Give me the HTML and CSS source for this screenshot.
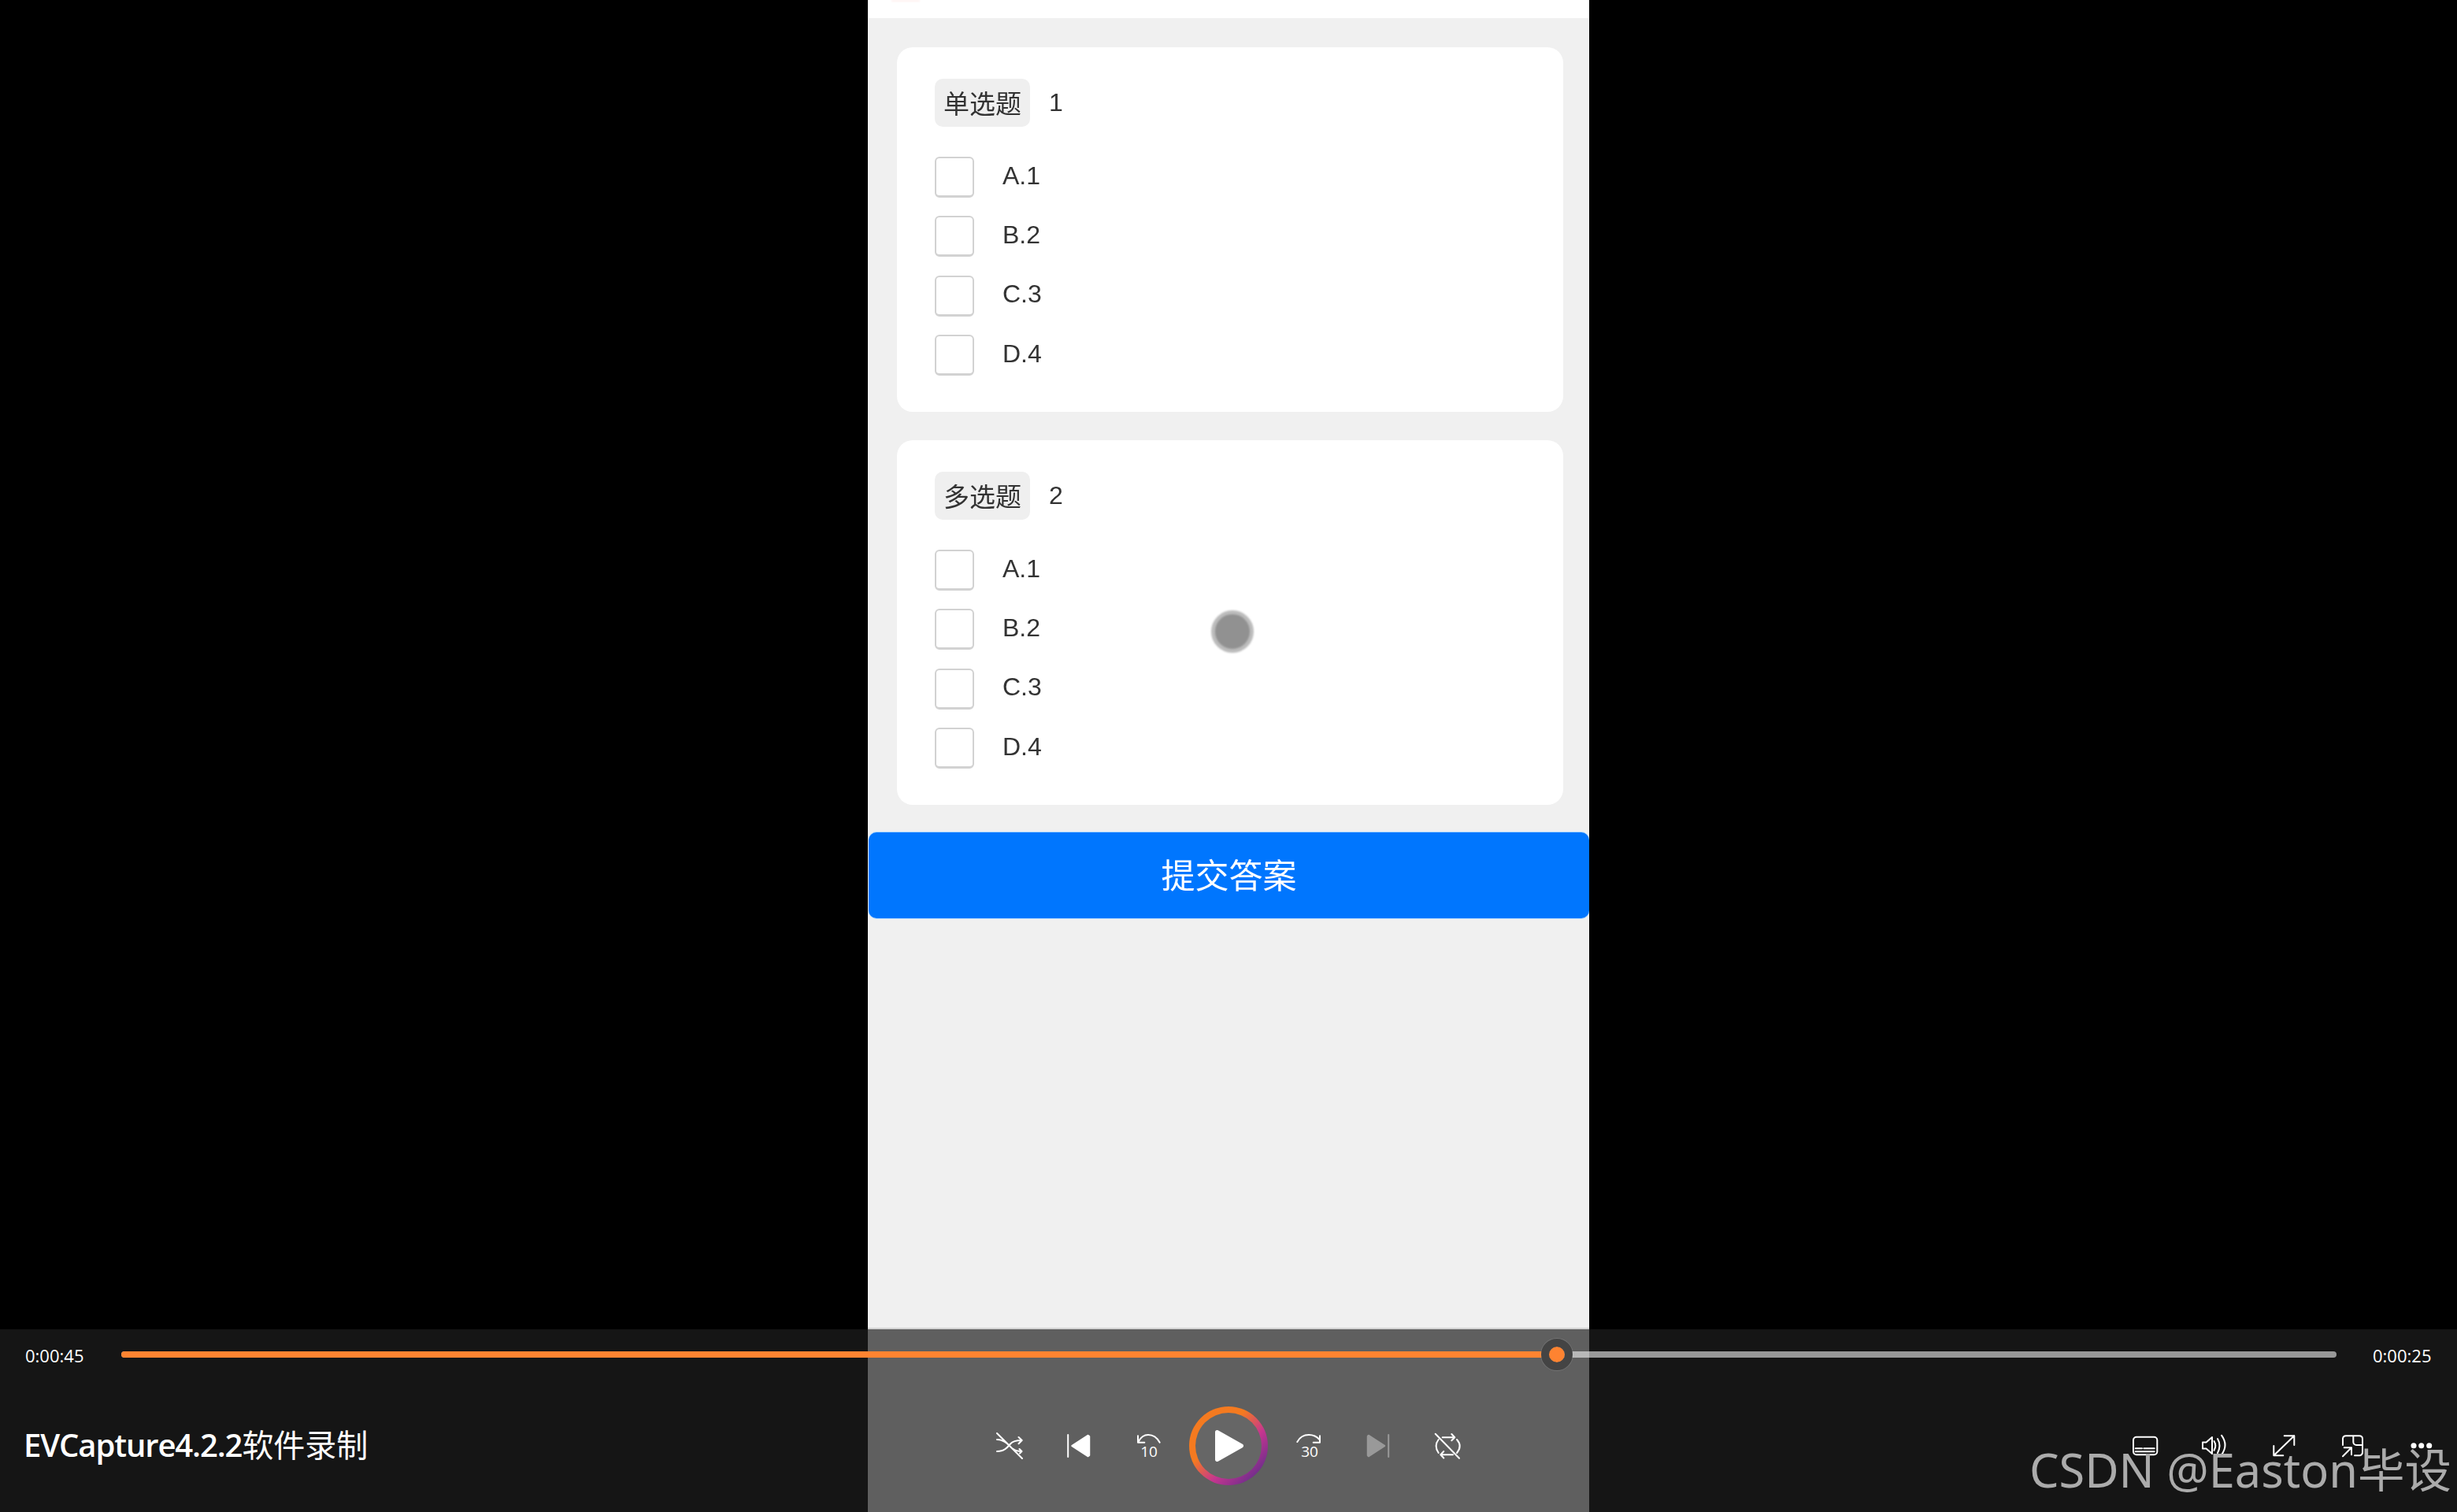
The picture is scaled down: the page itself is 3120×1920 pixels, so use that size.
FILE: index.html
```html
<!DOCTYPE html>
<html lang="zh-CN">
<head>
<meta charset="utf-8">
<title>EVCapture4.2.2软件录制</title>
<link rel="stylesheet" href="styles.css">
</head>
<body>
<main class="phone">
  <div class="strip"><span class="speck"></span></div>
  <section class="quiz">
    <article class="card">
      <header class="question"><span class="tag"><span class="tag-text">单选题</span></span><span class="qnum">1</span></header>
      <ul class="options">
        <li class="option"><span class="check"></span><span class="label">A.1</span></li>
        <li class="option"><span class="check"></span><span class="label">B.2</span></li>
        <li class="option"><span class="check"></span><span class="label">C.3</span></li>
        <li class="option"><span class="check"></span><span class="label">D.4</span></li>
      </ul>
    </article>
    <article class="card">
      <header class="question"><span class="tag"><span class="tag-text">多选题</span></span><span class="qnum">2</span></header>
      <ul class="options">
        <li class="option"><span class="check"></span><span class="label">A.1</span></li>
        <li class="option"><span class="check"></span><span class="label">B.2</span></li>
        <li class="option"><span class="check"></span><span class="label">C.3</span></li>
        <li class="option"><span class="check"></span><span class="label">D.4</span></li>
      </ul>
    </article>
  </section>
  <button class="submit">提交答案</button>
</main>

<div class="cursor"></div>

<footer class="player">
  <div class="timeline">
    <span class="time">0:00:45</span>
    <div class="track"><div class="played"></div><div class="thumb"></div></div>
    <span class="time time-end">0:00:25</span>
  </div>
  <div class="controls">
    <div class="title">EVCapture4.2.2<span class="title-cjk">软件录制</span></div>
    <div class="transport">
      <span class="ctl"><svg class="ico" viewBox="0 0 60 60"><path d="M14 14 46 46M14 22C22 22 26 26 29 29M34 33.500C37 36 41 37 45 37M14 37C24 37 28 31 31 27.500 34 24 38 23 45 23M41.500 19 45.700 23 41.500 27.300M42.500 34 45.500 37 43 39.500"/></svg></span>
      <span class="ctl"><svg class="ico" viewBox="0 0 60 60"><path d="M16.200 16V44"/><path class="solid" d="M21.500 30 41.500 17 43 18V42L41.500 43Z"/></svg></span>
      <span class="ctl"><svg class="ico" viewBox="0 0 60 60"><path d="M44.700 25.700C41 19 35 16 30 16 25 16 21 18 17.500 25M17 17.300V25.700H25.300"/><text class="ico-text" x="31" y="43.500">10</text></svg></span>
      <span class="ctl ctl-play"><span class="ring"><svg class="play-ico" viewBox="0 0 84 84"><path d="M27.500 24.500 58.500 42 27.500 59.500Z" class="solid"/></svg></span></span>
      <span class="ctl"><svg class="ico" viewBox="0 0 60 60"><path d="M15.300 25C19 18 25 16 30 16 35 16 40 18 43.500 22M44 17.300V25.700H35.700"/><text class="ico-text" x="31" y="43.500">30</text></svg></span>
      <span class="ctl"><svg class="ico ico-off" viewBox="0 0 60 60"><path d="M43.200 16V44"/><path class="solid" d="M38 30 18 17 17 18V42L18 43Z"/></svg></span>
      <span class="ctl"><svg class="ico" viewBox="0 0 60 60"><path d="M14.700 14.700 45 45.700M23.700 19.300H39.300M35.300 15 39.300 19.300 35.300 23.300M37 41.300H21.300M25.300 37 21.300 41.300 25.300 45.500M18.700 22C15.500 26 14 32 18.700 39M42 22C46.500 27 47 33 42 39"/></svg></span>
    </div>
    <div class="tools">
      <span class="ctl"><svg class="ico" viewBox="0 0 60 60"><rect x="15" y="18.700" width="30.300" height="22.600" rx="4"/><path d="M17.700 33.300H26M28.300 33.300H41.700M17.700 37.300H41.700"/></svg></span>
      <span class="ctl"><svg class="ico" viewBox="0 0 60 60"><path d="M27 19 19.500 25.500H15V33.500H19.500L27 40ZM29.500 24Q33 29.500 29.500 35.700M34 21Q39 29.500 34 39M39 16.700Q48 29 39 41.300"/></svg></span>
      <span class="ctl"><svg class="ico" viewBox="0 0 60 60"><path d="M17.300 42.300 43.300 17.300M30.700 17.300H43.300V29M17.300 30V42.300H29.300"/></svg></span>
      <span class="ctl"><svg class="ico" viewBox="0 0 60 60"><path d="M17 29V21A4 4 0 0 1 21 17.300H38A4 4 0 0 1 42 21V38A4 4 0 0 1 38 42.300H32M30.300 17.300V25A4 4 0 0 0 34.300 29H42M17 43.300 28 32.300M18.700 32.300H28V41.300"/></svg></span>
      <span class="ctl"><svg class="ico" viewBox="0 0 60 60"><circle class="solid" cx="19" cy="29.700" r="2.300"/><circle class="solid" cx="28.700" cy="29.700" r="2.300"/><circle class="solid" cx="38.700" cy="29.700" r="2.300"/></svg></span>
    </div>
  </div>
</footer>

<div class="watermark">CSDN @Easton毕设</div>
</body>
</html>
```

FILE: styles.css
```css
* { box-sizing: border-box; }

html, body {
  margin: 0;
  padding: 0;
}

body {
  position: relative;
  width: 3120px;
  height: 1920px;
  overflow: hidden;
  background: #000;
  font-family: "Liberation Sans", "Noto Sans CJK SC", sans-serif;
  color: #333;
}

.phone {
  width: 916px;
  height: 1920px;
  margin: 0 auto;
  background: #f0f0f0;
}

.strip {
  height: 23px;
  padding-left: 30px;
  background: #fff;
}

.speck {
  display: block;
  width: 36px;
  height: 2px;
  background: #fff0ee;
  filter: blur(1px);
}

.quiz {
  display: flex;
  flex-direction: column;
  gap: 36px;
  margin: 37px 33px 0 37px;
}

.card {
  height: 463px;
  padding: 40px 48px 0;
  background: #fff;
  border-radius: 20px;
}

.question {
  display: flex;
  align-items: center;
  gap: 24px;
  height: 61px;
}

.tag {
  display: flex;
  align-items: center;
  justify-content: center;
  width: 121px;
  height: 61px;
  padding-bottom: 2px;
  background: #efefef;
  border-radius: 10px;
  font-size: 33px;
}

.tag-text,
.qnum,
.label {
  filter: blur(0.5px);
}

.qnum {
  font-size: 32px;
}

.options {
  display: flex;
  flex-direction: column;
  gap: 23.400px;
  margin: 38px 0 0;
  padding: 0;
  list-style: none;
}

.option {
  display: flex;
  align-items: center;
  gap: 36px;
  height: 52px;
  font-size: 32px;
}

.label {
  padding-bottom: 4px;
}

.check {
  width: 50px;
  height: 52px;
  background: #fff;
  border: 2px solid #d2d2d2;
  border-bottom-width: 3px;
  border-radius: 6px;
}

.submit {
  display: block;
  width: 915px;
  height: 109px;
  margin: 35px 0 0 1px;
  padding: 0 0 6px;
  border: 0;
  border-radius: 10px;
  background: #0076fe;
  box-shadow: 0 -1px #a8d4ff, 0 1px #a8d4ff;
  color: #fff;
  font-family: "Noto Sans CJK SC", sans-serif;
  font-size: 43px;
  filter: blur(0.4px);
}

.cursor {
  position: absolute;
  left: 1538px;
  top: 775px;
  width: 54px;
  height: 54px;
  background: #919191;
  border: 5px solid #bcbcbc;
  border-radius: 50%;
  filter: blur(1px);
}

.player {
  position: absolute;
  left: 0;
  right: 0;
  bottom: 0;
  height: 232px;
  background: rgba(30, 30, 30, 0.696);
  box-shadow: 0 -2px rgba(0, 0, 0, 0.12);
  color: #fff;
  font-family: "Open Sans", "Noto Sans CJK SC", sans-serif;
}

.timeline {
  display: flex;
  align-items: center;
  gap: 47.500px;
  height: 64px;
  padding: 0 32px;
}

.time {
  flex: none;
  width: 74px;
  font-size: 22px;
  line-height: 30px;
  margin-top: 2px;
}

.time-end {
  margin-left: -1px;
  margin-right: 1px;
}

.track {
  position: relative;
  flex: 1;
  height: 8px;
  background: rgba(255, 255, 255, 0.56);
  border-radius: 4px;
}

.played {
  position: absolute;
  left: 0;
  top: 0;
  bottom: 0;
  width: 1823px;
  background: #ff8431;
  border-radius: 4px 0 0 4px;
}

.thumb {
  position: absolute;
  left: 1803.500px;
  top: -16px;
  width: 40px;
  height: 40px;
  background: #fe8331;
  background-clip: padding-box;
  border: 10px solid #444;
  border-radius: 50%;
  box-shadow: 0 0 0 1px rgba(255, 255, 255, 0.12);
}

.controls {
  display: grid;
  grid-template-columns: 1fr auto 1fr;
  align-items: center;
  height: 168px;
}

.title {
  padding-left: 30px;
  padding-bottom: 6px;
  font-size: 40px;
  font-weight: 600;
  letter-spacing: -1.100px;
  white-space: nowrap;
}

.title-cjk {
  font-weight: 400;
  letter-spacing: 0;
}

.transport,
.tools {
  display: flex;
  align-items: center;
}

.tools {
  justify-content: flex-end;
}

.ctl {
  display: flex;
  align-items: center;
  justify-content: center;
  width: 88px;
  height: 100px;
}

.ctl-play {
  width: 116px;
}

.ico {
  width: 60px;
  height: 60px;
  fill: none;
  stroke: #fff;
  stroke-width: 2px;
  stroke-linecap: round;
  stroke-linejoin: round;
}

.ico-off {
  stroke: #999;
}

.ico .solid {
  fill: #fff;
  stroke-width: 2.500px;
}

.ico-off .solid {
  fill: #999;
}

.ico-text {
  fill: #fff;
  stroke: none;
  font-family: "Open Sans", sans-serif;
  font-size: 19px;
  text-anchor: middle;
}

.ring {
  display: flex;
  align-items: center;
  justify-content: center;
  width: 100px;
  height: 100px;
  border: 8px solid transparent;
  border-radius: 50%;
  background:
    linear-gradient(#666, #666) padding-box,
    linear-gradient(135deg, #f47a20 38%, #c5368f 62%, #6c2d8c 88%) border-box;
}

.play-ico {
  flex: none;
  width: 84px;
  height: 84px;
}

.play-ico .solid {
  fill: #fff;
  stroke: #fff;
  stroke-width: 5px;
  stroke-linejoin: round;
}

.watermark {
  position: absolute;
  right: 7px;
  top: 1824px;
  color: #ababab;
  font-family: "Noto Sans", "Noto Sans CJK SC", sans-serif;
  font-size: 59.500px;
  line-height: 84px;
  white-space: nowrap;
}
```
